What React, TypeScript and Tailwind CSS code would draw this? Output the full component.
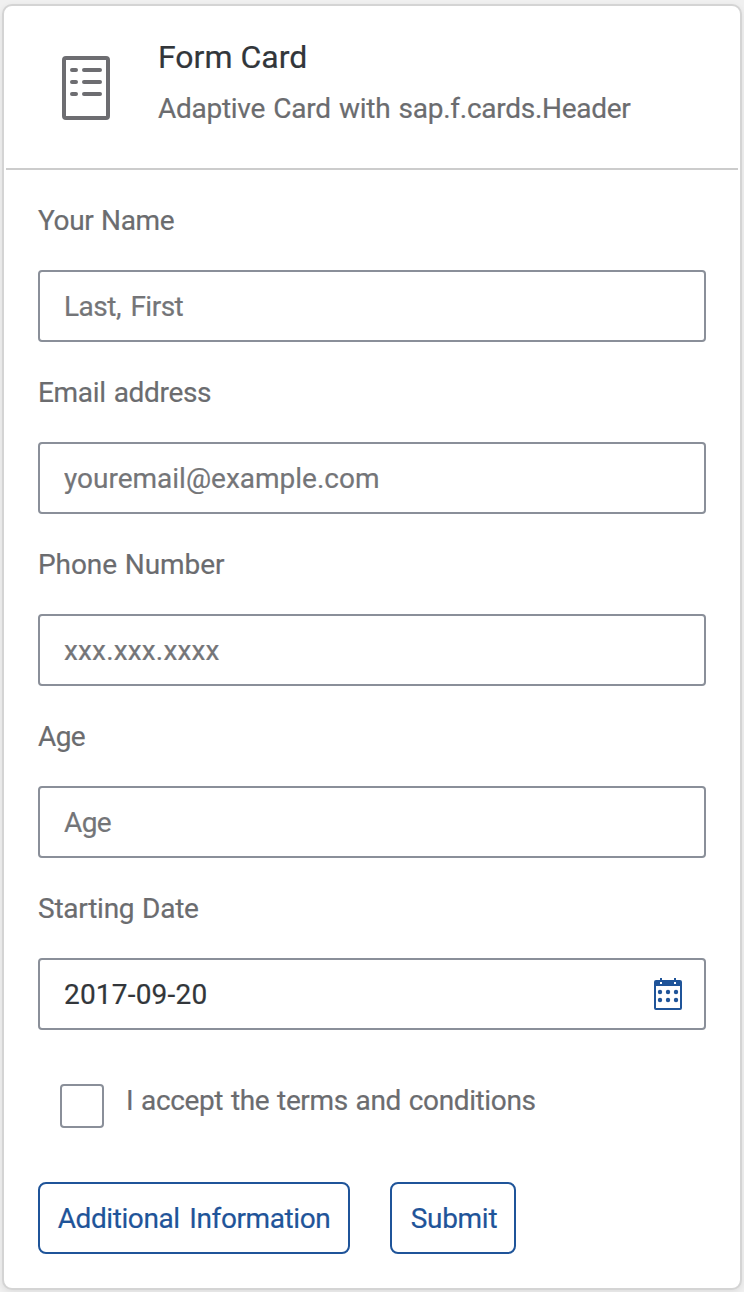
import { useState } from "react";

interface Field {
  id: string;
  label: string;
  labelClass: string;
  placeholder: string;
  inputClass: string;
}

const fields: Field[] = [
  { id: "name", label: "Your Name", labelClass: "tracking-[-0.38px] [word-spacing:1.2px]", placeholder: "Last, First", inputClass: "tracking-[-0.5px] [word-spacing:3px]" },
  { id: "email", label: "Email address", labelClass: "tracking-[-0.34px] [word-spacing:1.5px]", placeholder: "youremail@example.com", inputClass: "tracking-[0px]" },
  { id: "phone", label: "Phone Number", labelClass: "tracking-[-0.08px] [word-spacing:1px]", placeholder: "xxx.xxx.xxxx", inputClass: "tracking-[0.16px]" },
  { id: "age", label: "Age", labelClass: "tracking-[-0.6px]", placeholder: "Age", inputClass: "tracking-[-0.6px]" },
];

function FormIcon() {
  return (
    <svg width="48" height="64" viewBox="0 0 48 64" fill="none" stroke="#6d6d71" strokeWidth="4" strokeLinecap="round">
      <rect x="2" y="2" width="44" height="60" rx="2" />
      <path d="M10 14h4M22 14h16M10 26h4M22 26h16M10 38h4M22 38h16" />
    </svg>
  );
}

function CalendarIcon() {
  return (
    <svg width="28" height="32" viewBox="0 0 28 32" fill="#1f5499">
      <path
        fillRule="evenodd"
        d="M2 2h4V0h2v2h12V0h2v2h4a2 2 0 0 1 2 2v26a2 2 0 0 1-2 2H2a2 2 0 0 1-2-2V4a2 2 0 0 1 2-2ZM2 8v22h24V8ZM6 4v2h2V4ZM20 4v2h2V4Z"
      />
      {[14, 22].map((y) => [6, 14, 22].map((x) => <circle key={`${x}-${y}`} cx={x} cy={y} r="2.2" />))}
    </svg>
  );
}

const labelBase = "block h-[69px] text-[28px] leading-[40px] text-[#6b6c6f]";
const boxBase = "flex h-[72px] items-center rounded-[4px] border-2 border-[#8a8f99] bg-white";
const inputBase = "min-w-0 flex-1 bg-transparent pl-6 pt-0.5 text-[28px] outline-none placeholder:text-[#747578] placeholder:opacity-100";

export default function App() {
  const [date, setDate] = useState("2017-09-20");

  return (
    <div className="h-[1292px] w-[744px] bg-[#f0f0f0] px-[2px] pt-1 font-['Roboto',sans-serif] [-webkit-text-stroke-width:0.2px]">
      <main className="h-[1286px] w-[740px] rounded-[10px] border-2 border-[#d4d4d4] bg-white px-[2px] shadow-[0_2px_6px_rgba(0,0,0,0.08)]">
        <header className="flex h-[164px] border-b-2 border-[#cccccc] pl-14">
          <div className="pt-[50px]">
            <FormIcon />
          </div>
          <div className="pl-12 pt-[30px]">
            <h1 className="text-[32px] leading-[42px] text-[#32363a]">Form Card</h1>
            <p className="mt-[11px] text-[28px] leading-[40px] tracking-[-0.27px] text-[#6b6c6f] [word-spacing:1.6px]">Adaptive Card with sap.f.cards.Header</p>
          </div>
        </header>

        <form className="px-8 pt-[31px]" onSubmit={(e) => e.preventDefault()}>
          {fields.map((f) => (
            <div key={f.id} className="h-[172px]">
              <label htmlFor={f.id} className={labelBase}>
                <span className={f.labelClass}>{f.label}</span>
              </label>
              <div className={boxBase}>
                <input id={f.id} placeholder={f.placeholder} className={`${inputBase} ${f.inputClass}`} />
              </div>
            </div>
          ))}
          <div>
            <label htmlFor="date" className={labelBase}>
              <span className="tracking-[-0.25px] [word-spacing:1px]">Starting Date</span>
            </label>
            <div className={`${boxBase} pr-[22px]`}>
              <input
                id="date"
                value={date}
                onChange={(e) => setDate(e.target.value)}
                className={`${inputBase} tracking-[0.2px] text-[#32363a]`}
              />
              <CalendarIcon />
            </div>
          </div>

          <label className="mt-[50px] flex h-12 items-start pl-[22px]">
            <input type="checkbox" className="mt-1 size-11 appearance-none rounded-[4px] border-2 border-[#8a8f99] bg-white" />
            <span className="pl-[22px] pt-px text-[28px] leading-[40px] tracking-[-0.38px] text-[#6b6c6f] [word-spacing:1.3px]">I accept the terms and conditions</span>
          </label>

          <div className="mt-[54px] flex gap-10 text-[28px] text-[#1f5499]">
            <button type="button" className="h-[72px] w-[312px] whitespace-nowrap rounded-lg border-2 border-[#1f5499] bg-white pt-0.5 tracking-[-0.4px] [word-spacing:3px]">
              Additional Information
            </button>
            <button type="submit" className="h-[72px] w-[126px] rounded-lg border-2 border-[#1f5499] bg-white pl-0.5 pt-0.5 tracking-[-0.3px]">
              Submit
            </button>
          </div>
        </form>
      </main>
    </div>
  );
}
